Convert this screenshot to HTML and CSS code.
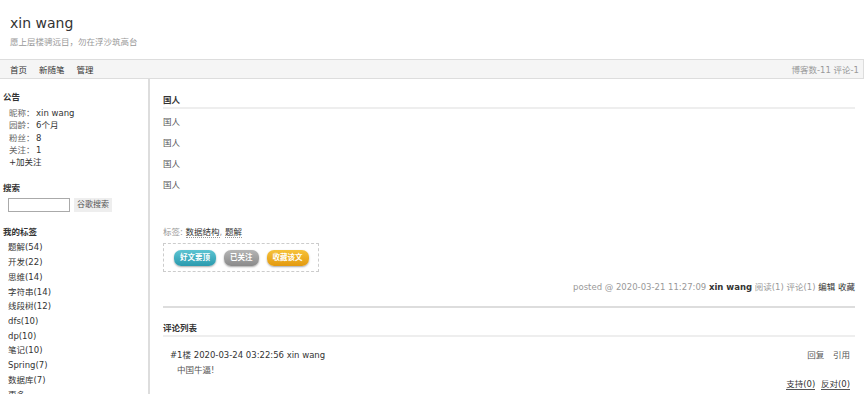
FILE: index.html
```html
<!DOCTYPE html>
<html lang="zh">
<head>
  <meta charset="UTF-8">
  <title>xin wang</title>
  <link rel="stylesheet" href="styles.css">
</head>
<body>
  <!-- Header -->
  <header class="header">
    <h1 class="blog-title">xin wang</h1>
    <p class="blog-desc">愿上层楼骋远目，勿在浮沙筑高台</p>
  </header>

  <!-- Navigation -->
  <nav class="navbar">
    <ul class="nav-links">
      <li><a href="#">首页</a></li>
      <li><a href="#">新随笔</a></li>
      <li><a href="#">管理</a></li>
    </ul>
    <div class="nav-stats">博客数-11 评论-1</div>
  </nav>

  <div class="layout">
    <!-- Sidebar -->
    <aside class="sidebar">
      <h3 class="side-title first">公告</h3>
      <ul class="profile">
        <li><span class="label">昵称：</span>xin wang</li>
        <li><span class="label">园龄：</span>6个月</li>
        <li><span class="label">粉丝：</span>8</li>
        <li><span class="label">关注：</span>1</li>
        <li>+加关注</li>
      </ul>

      <h3 class="side-title">搜索</h3>
      <div class="search">
        <input type="text" class="search-input">
        <button class="search-btn">谷歌搜索</button>
      </div>

      <h3 class="side-title">我的标签</h3>
      <ul class="tags">
        <li>题解(54)</li>
        <li>开发(22)</li>
        <li>思维(14)</li>
        <li>字符串(14)</li>
        <li>线段树(12)</li>
        <li>dfs(10)</li>
        <li>dp(10)</li>
        <li>笔记(10)</li>
        <li>Spring(7)</li>
        <li>数据库(7)</li>
        <li>更多</li>
      </ul>
    </aside>

    <!-- Main -->
    <main class="main">
      <h2 class="post-title">国人</h2>
      <div class="post-body">
        <p>国人</p>
        <p>国人</p>
        <p>国人</p>
        <p>国人</p>
      </div>

      <div class="post-tags">标签: <a href="#">数据结构</a>, <a href="#">题解</a></div>

      <div class="digg-box">
        <span class="btn btn-teal">好文要顶</span>
        <span class="btn btn-gray">已关注</span>
        <span class="btn btn-orange">收藏该文</span>
      </div>

      <div class="post-info">
        posted @ 2020-03-21 11:27:09 <b>xin wang</b> 阅读(1) 评论(1) <a href="#">编辑</a> <a href="#">收藏</a>
      </div>

      <hr class="divider">

      <h2 class="comment-title">评论列表</h2>
      <div class="comment">
        <div class="comment-head">
          <span>#1楼 2020-03-24 03:22:56 xin wang</span>
          <span class="comment-actions"><a href="#">回复</a> <a href="#">引用</a></span>
        </div>
        <div class="comment-body">中国牛逼!</div>
        <div class="comment-vote"><a href="#">支持(0)</a> <a href="#">反对(0)</a></div>
      </div>
    </main>
  </div>
</body>
</html>
```

FILE: styles.css
```css
body {
  margin: 0;
  font-family: "DejaVu Sans", "Noto Sans CJK SC", sans-serif;
  font-size: 8.5px;
  color: #333;
  background: #fff;
  overflow: hidden;
}
a {
  color: #333;
  text-decoration: none;
}
ul {
  list-style: none;
  margin: 0;
  padding: 0;
}

/* header */
.header {
  padding: 13px 10px 0;
  height: 46px;
}
.blog-title {
  margin: 0;
  font-size: 14px;
  font-weight: normal;
  line-height: 20px;
}
.blog-desc {
  margin: 3px 0 0;
  color: #999;
  line-height: 12px;
}

/* nav */
.navbar {
  display: flex;
  justify-content: space-between;
  align-items: center;
  height: 18px;
  border-top: 1px solid #ddd;
  border-bottom: 1px solid #ddd;
  border-right: 1px solid #ddd;
  background-color: #f5f5f5;
  padding: 0 4px 0 10px;
  margin-right: 1px;
}
.nav-links {
  display: flex;
  gap: 12px;
}
.nav-stats {
  color: #999;
}

/* layout */
.layout {
  display: flex;
}
.sidebar {
  width: 150px;
  flex-shrink: 0;
  border-right: 2px solid #ddd;
  padding: 0 0 0 3px;
  box-sizing: border-box;
  min-height: 320px;
}
.side-title {
  margin: 14px 0 4px;
  font-size: 8.5px;
  font-weight: bold;
  line-height: 12px;
}
.side-title.first {
  margin-top: 12px;
}
.profile li {
  padding-left: 6px;
  line-height: 12.3px;
}
.profile .label {
  color: #666;
  display: inline-block;
  width: 27px;
}
.search {
  display: flex;
  align-items: center;
  gap: 4px;
  padding-left: 5px;
  margin-bottom: 6px;
}
.search-input {
  width: 62px;
  height: 14px;
  padding: 0;
  border: 1px solid #aaa;
  box-sizing: border-box;
}
.search-btn {
  font-family: inherit;
  font-size: 8px;
  color: #555;
  background: #eee;
  border: none;
  padding: 1px 3px;
  line-height: 12px;
}
.tags {
  margin-top: -2px;
}
.tags li {
  padding-left: 5px;
  line-height: 14.7px;
}

/* main */
.main {
  flex: 1;
  padding: 0 10px 0 13px;
}
.post-title {
  margin: 15px 0 0;
  font-size: 8.5px;
  font-weight: bold;
  line-height: 12px;
  padding-bottom: 1px;
  border-bottom: 2px solid #eee;
}
.post-body {
  color: #555;
  margin-top: -2px;
}
.post-body p {
  margin: 9px 0 0;
  line-height: 12px;
}
.post-tags {
  margin-top: 35px;
  color: #999;
  line-height: 12px;
}
.post-tags a {
  border-bottom: 1px dotted #999;
}
.digg-box {
  display: flex;
  gap: 8px;
  width: 156px;
  height: 29px;
  box-sizing: border-box;
  align-items: center;
  padding-left: 10px;
  margin-top: 5px;
  border: 1px dashed #ccc;
}
.btn {
  display: inline-block;
  color: #fff;
  font-weight: bold;
  font-size: 7.5px;
  line-height: 16px;
  padding: 0 6px;
  border-radius: 7px;
  box-shadow: 0 1px 2px rgba(0, 0, 0, 0.35);
}
.btn-teal {
  background: linear-gradient(#5cc4d2, #2a9aae);
}
.btn-gray {
  background: linear-gradient(#b5b5b5, #8a8a8a);
}
.btn-orange {
  background: linear-gradient(#f6c23a, #e39a0f);
}
.post-info {
  margin-top: 9px;
  text-align: right;
  color: #999;
  line-height: 12px;
}
.post-info b {
  color: #333;
}
.divider {
  border: none;
  border-top: 2px solid #ddd;
  margin: 13px 0 0;
}
.comment-title {
  margin: 14px 0 0;
  font-size: 8.5px;
  font-weight: bold;
  line-height: 12px;
  padding-bottom: 1px;
  border-bottom: 2px solid #eee;
}
.comment {
  padding: 0 5px 0 7px;
}
.comment-head {
  display: flex;
  justify-content: space-between;
  margin-top: 12px;
  line-height: 12px;
}
.comment-actions a {
  color: #555;
  margin-left: 6px;
}
.comment-body {
  padding-left: 7px;
  margin-top: 3px;
  color: #555;
  line-height: 12px;
}
.comment-vote {
  text-align: right;
  margin-top: 2px;
  line-height: 12px;
}
.comment-vote a {
  border-bottom: 1px solid #555;
  margin-left: 3px;
}
```
